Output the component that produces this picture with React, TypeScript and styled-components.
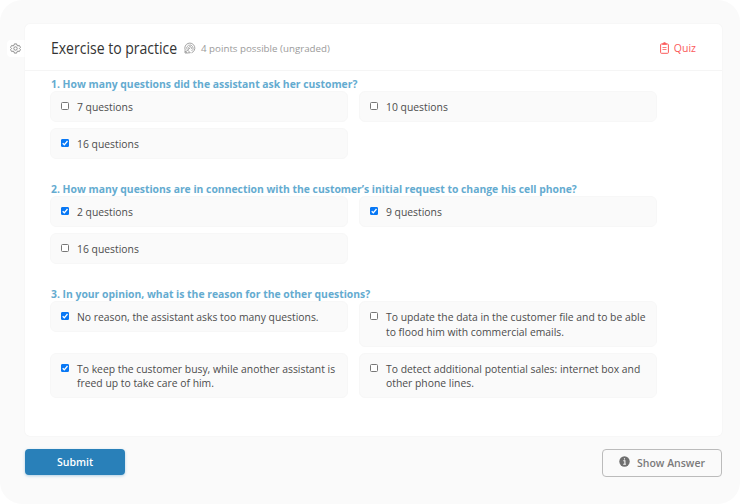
import React, { useState } from "react";
import styled, { createGlobalStyle } from "styled-components";

const GlobalStyle = createGlobalStyle`
  * { box-sizing: border-box; }
  body { margin: 0; background: #fff; font-family: "Open Sans", "Noto Sans", sans-serif; }
  button { font-family: inherit; cursor: pointer; }
`;

const Page = styled.main`
  width: 740px;
  height: 504px;
  padding: 24px 18px 0 7px;
  background: #fafafa;
  border-radius: 22px;
  overflow: hidden;
`;

const Panel = styled.div`
  display: flex;
  align-items: flex-start;
`;

const SettingsTab = styled.button`
  display: flex;
  align-items: center;
  justify-content: center;
  width: 18px;
  height: 17px;
  margin-top: 16px;
  padding: 0 2px 0 0;
  border: 0;
  border-radius: 4px 0 0 4px;
  background: #fff;
  color: #858585;
`;

const Card = styled.section`
  width: 697px;
  height: 412px;
  background: #fff;
  border-radius: 5px;
  box-shadow: 0 0 2px rgba(0, 0, 0, 0.06);
`;

const Header = styled.header`
  display: flex;
  align-items: center;
  height: 47px;
  padding: 2px 26px 0 26px;
  border-bottom: 1px solid #f5f5f5;
`;

const Title = styled.h1`
  width: 126px;
  margin: 0 7px 0 0;
  font-size: 16px;
  font-weight: 400;
  line-height: 22px;
  color: #333;
  white-space: nowrap;
  transform: scaleX(0.876);
  transform-origin: left center;
`;

const Points = styled.span`
  margin: 1px 0 0 5px;
  font-size: 9.75px;
  color: #9b9b9b;
  white-space: nowrap;
`;

const Kind = styled.span`
  display: flex;
  align-items: center;
  gap: 5px;
  margin: -1px 0 0 auto;
  font-size: 10.5px;
  color: #fb5a5a;
`;

const Questions = styled.div`
  display: flex;
  flex-direction: column;
  gap: 23px;
  padding: 6px 0 0 26px;
`;

const Prompt = styled.h2`
  margin: 0;
  padding-top: 1px;
  font-size: 10.37px;
  font-weight: 700;
  line-height: 13px;
  color: #64abd0;
  white-space: nowrap;
`;

const Options = styled.div`
  display: grid;
  grid-template-columns: 298px 298px;
  column-gap: 11px;
  row-gap: 6px;
  align-items: start;
  margin-left: -1px;
`;

const Option = styled.label`
  display: flex;
  align-items: flex-start;
  min-height: 31px;
  padding: 8px 8px 6.5px 10px;
  background: #fafafa;
  border: 1px solid #f7f7f7;
  border-radius: 6px;
  font-size: 10.37px;
  line-height: 14.5px;
  color: #4c4c4c;
  cursor: pointer;
`;

const CheckCell = styled.span`
  display: grid;
  flex: none;
  width: 16px;
  > * { grid-area: 1 / 1; }
`;

const Check = styled.input`
  appearance: none;
  width: 8px;
  height: 8px;
  margin: 2px 0 0;
  border: 1px solid #777;
  border-radius: 1.5px;
  background: #fff;

  &:checked {
    border-color: #0878f5;
    background: #0878f5;
    border-radius: 1px;
  }
`;

const Tick = styled.svg`
  width: 8px;
  height: 8px;
  margin-top: 2px;
  pointer-events: none;
`;

const Actions = styled.footer`
  display: flex;
  justify-content: space-between;
  padding: 13px 0 0 18px;
`;

const SubmitButton = styled.button`
  width: 100px;
  height: 26px;
  padding: 0;
  border: 0;
  border-radius: 4px;
  background: #2980b9;
  box-shadow: 0 1px 3px rgba(41, 128, 185, 0.35);
  color: #fff;
  font-size: 10.5px;
  font-weight: 600;
`;

const AnswerButton = styled.button`
  display: flex;
  align-items: center;
  justify-content: center;
  gap: 7px;
  width: 120px;
  height: 28px;
  padding: 0;
  border: 1px solid #bbb;
  border-radius: 4px;
  background: transparent;
  color: #7a7a7a;
  font-size: 10.5px;
  font-weight: 600;
  white-space: nowrap;

  svg { margin-bottom: 4px; }
`;

const GearIcon = () => (
  <svg width="11" height="11" viewBox="0 0 24 24" fill="none" stroke="currentColor" strokeWidth="2">
    <path d="M9.500 2h5l.8 3.200 2 1.100 3.100-.9 2.400 4.200-2.300 2.400 2.300 2.400-2.400 4.200-3.100-.9-2 1.100-.8 3.200h-5l-.8-3.200-2-1.100-3.100.9-2.400-4.200L3.500 12 1.200 9.600l2.400-4.200 3.100.9 2-1.100z" />
    <circle cx="12" cy="12" r="3.700" />
  </svg>
);

const TargetIcon = () => (
  <svg width="12" height="12" viewBox="0 0 12 12" fill="none" stroke="#9a9a9a">
    <path d="M1.200 8A5 5 0 1 1 7.500 10.800" strokeWidth=".9" />
    <path d="M3 7.500A3.200 3.200 0 1 1 7.500 9" strokeWidth=".8" />
    <path d="M4.700 6.700A1.500 1.500 0 1 1 7 7.200" strokeWidth=".8" />
    <path d="M6.300 5.700 1.500 10M1 8.200V11H4.200M3.500 8 6.300 10.800H4M1 9l2 1.800" strokeWidth=".9" />
  </svg>
);

const ClipboardIcon = () => (
  <svg width="9" height="12" viewBox="0 0 9 12" fill="none" stroke="currentColor">
    <rect x=".6" y="2" width="7.800" height="9.300" rx=".8" />
    <path d="M2.300 2h4.400M3.500 1h2" strokeWidth="1.500" />
    <path d="M2.500 5.500h4M2.500 7.500h4" strokeWidth=".8" />
  </svg>
);

const InfoIcon = () => (
  <svg width="11" height="11" viewBox="0 0 11 11">
    <circle cx="5.500" cy="5.500" r="5.200" fill="#6f6f6f" />
    <path d="M4.300 4.700h1.600v3.500M4.200 8.200h2.700M5.500 2.200v1.300" stroke="#fafafa" strokeWidth="1.100" fill="none" />
  </svg>
);

type Answer = { text: string; checked?: boolean };

const questions: { prompt: string; answers: Answer[] }[] = [
  {
    prompt: "1. How many questions did the assistant ask her customer?",
    answers: [{ text: "7 questions" }, { text: "10 questions" }, { text: "16 questions", checked: true }],
  },
  {
    prompt: "2. How many questions are in connection with the customer’s initial request to change his cell phone?",
    answers: [{ text: "2 questions", checked: true }, { text: "9 questions", checked: true }, { text: "16 questions" }],
  },
  {
    prompt: "3. In your opinion, what is the reason for the other questions?",
    answers: [
      { text: "No reason, the assistant asks too many questions.", checked: true },
      { text: "To update the data in the customer file and to be able to flood him with commercial emails." },
      { text: "To keep the customer busy, while another assistant is freed up to take care of him.", checked: true },
      { text: "To detect additional potential sales: internet box and other phone lines." },
    ],
  },
];

function AnswerOption({ text, checked = false }: Answer) {
  const [on, setOn] = useState(checked);
  return (
    <Option>
      <CheckCell>
        <Check type="checkbox" checked={on} onChange={() => setOn(!on)} />
        {on && (
          <Tick viewBox="0 0 8 8">
            <path d="M1.700 4.200 3.300 5.800 6.500 2" fill="none" stroke="#fff" strokeWidth="1.300" />
          </Tick>
        )}
      </CheckCell>
      <span>{text}</span>
    </Option>
  );
}

export default function App() {
  return (
    <>
      <GlobalStyle />
      <Page>
        <Panel>
          <SettingsTab aria-label="Settings"><GearIcon /></SettingsTab>
          <Card>
            <Header>
              <Title>Exercise to practice</Title>
              <TargetIcon />
              <Points>4 points possible (ungraded)</Points>
              <Kind><ClipboardIcon />Quiz</Kind>
            </Header>
            <Questions>
              {questions.map((q) => (
                <div key={q.prompt}>
                  <Prompt>{q.prompt}</Prompt>
                  <Options>
                    {q.answers.map((a) => <AnswerOption key={a.text} {...a} />)}
                  </Options>
                </div>
              ))}
            </Questions>
          </Card>
        </Panel>
        <Actions>
          <SubmitButton>Submit</SubmitButton>
          <AnswerButton><InfoIcon />Show Answer</AnswerButton>
        </Actions>
      </Page>
    </>
  );
}
